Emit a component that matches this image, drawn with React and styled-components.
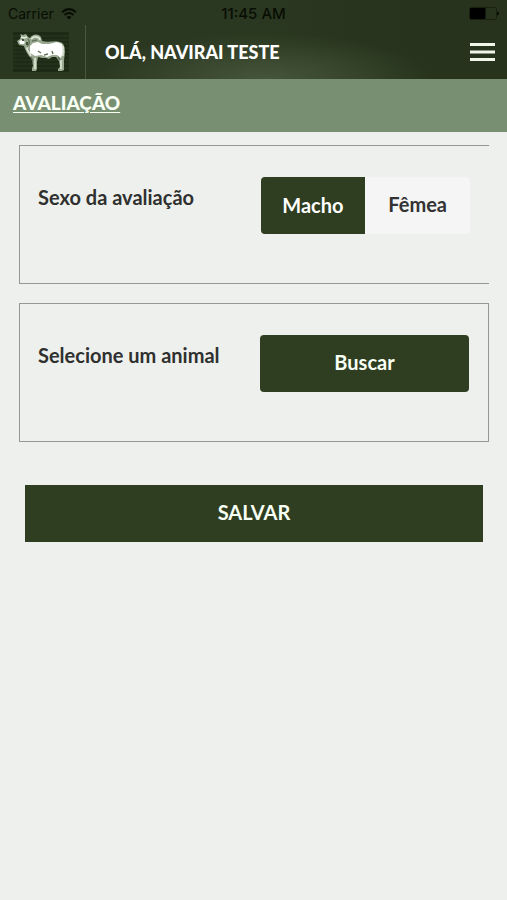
import React, { useState } from "react";
import styled, { createGlobalStyle } from "styled-components";

const GlobalStyle = createGlobalStyle`
  *, *::before, *::after { box-sizing: border-box; }
  body {
    margin: 0;
    background: #eef0ed;
    color: #2f302f;
    font-family: Lato, "Open Sans", sans-serif;
    font-size: 20px;
    font-weight: 700;
    line-height: 24px;
  }
  button, input { font: inherit; margin: 0; }
`;

const Header = styled.header`
  height: 79px;
  color: #fff;
  background:
    radial-gradient(ellipse 170px 46px at 52% 100%, #45553a 0%, #3a4930 40%, rgba(43, 56, 33, 0) 100%),
    linear-gradient(90deg, #2a3721 0%, #2b3821 50%, #27331d 80%);
`;

const StatusBar = styled.div`
  display: grid;
  grid-template-columns: 1fr auto 1fr;
  align-items: center;
  height: 25px;
  padding: 2px 8px 0;
  color: #080d04;
  font-family: Inter, "Liberation Sans", sans-serif;
  font-size: 14px;
  font-weight: 400;
  line-height: 22px;
`;

const Carrier = styled.span`
  display: flex;
  align-items: center;
  gap: 7px;
`;

const Clock = styled.time`
  font-size: 15px;
  font-weight: 500;
`;

const BatteryIcon = styled.svg`
  justify-self: end;
`;

const NavBar = styled.div`
  display: flex;
  align-items: stretch;
  height: 54px;
  padding: 0 12px 0 13px;
`;

const Logo = styled.svg`
  display: block;
  align-self: center;
  margin-right: 16px;
`;

const Greeting = styled.h1`
  display: flex;
  align-items: center;
  flex: 1;
  margin: 0;
  padding-left: 19px;
  border-left: 1px solid #4a5740;
  font-size: 18px;
  font-weight: 900;
  line-height: 24px;
`;

const MenuButton = styled.button`
  display: flex;
  align-items: center;
  padding: 0;
  border: 0;
  background: none;
  color: #f1f6ea;
  cursor: pointer;
`;

const TitleBar = styled.div`
  height: 53px;
  padding: 12px 13px;
  background: #789071;
`;

const PageTitle = styled.h2`
  margin: 0;
  color: #f8fff4;
  font-size: 19px;
  font-weight: 900;
  line-height: 24px;
  text-decoration: underline;
  text-decoration-thickness: 1px;
  text-underline-offset: 2px;
`;

const Form = styled.form`
  display: flex;
  flex-direction: column;
  gap: 19px;
  padding: 13px 18px 24px 19px;
`;

const Card = styled.section`
  display: grid;
  grid-template-columns: 1fr 1fr;
  column-gap: 13px;
  align-items: start;
  min-height: 139px;
  padding: 31px 19px 30px 18px;
  border: 1px solid #949894;
  border-right-width: ${(p) => (p.$open ? "0" : "1px")};
`;

const FieldName = styled.span`
  padding-top: 8px;
  white-space: nowrap;
`;

const Segments = styled.div`
  display: grid;
  grid-template-columns: 1fr 1fr;
  height: 57px;
  border-radius: 4px;
  overflow: hidden;
`;

const Segment = styled.label`
  display: flex;
  align-items: center;
  justify-content: center;
  padding-bottom: ${(p) => (p.$checked ? "2px" : "4px")};
  background: ${(p) => (p.$checked ? "#2f3d20" : "#f5f5f5")};
  color: ${(p) => (p.$checked ? "#fff" : "#333")};
  cursor: pointer;
`;

const SegmentInput = styled.input`
  appearance: none;
  width: 0;
  height: 0;
`;

const ActionButton = styled.button`
  height: 57px;
  padding: 0 16px 3px;
  border: 0;
  border-radius: ${(p) => (p.$square ? "0" : "4px")};
  margin: ${(p) => (p.$square ? "24px 6px 0" : "0")};
  background: #2f3d20;
  color: #f8fff4;
  cursor: pointer;
`;

function WifiIcon() {
  return (
    <svg width="16" height="12" viewBox="0 0 16 12" fill="none" stroke="currentColor" strokeWidth="2" aria-hidden="true">
      <path d="M1 4.3Q8-2 15 4.3M3.5 7Q8 3 12.5 7" />
      <path d="M5.5 9Q8 7 10.5 9L8 11.5Z" fill="currentColor" stroke="none" />
    </svg>
  );
}

function Battery() {
  return (
    <BatteryIcon width="30" height="13" viewBox="0 0 30 13" role="img" aria-label="Bateria">
      <rect x="0.5" y="0.5" width="27" height="12" rx="2" fill="none" stroke="#182010" />
      <rect x="1" y="1" width="15.5" height="11" rx="1" fill="#000" />
      <path d="M28 4.5q2 0 2 2t-2 2z" fill="#080d04" />
    </BatteryIcon>
  );
}

function BullLogo() {
  return (
    <Logo width="56" height="40" viewBox="0 0 56 40" role="img" aria-label="Navirai">
      <rect width="56" height="40" fill="#1d2a16" />
      <path
        d="M0 4H56M0 8H56M0 12H56M0 16H56M0 20H56M0 24H56M0 28H56M0 32H56M0 36H56"
        stroke="#2b3922"
      />
      <path
        d="M4 9 7 7 8 4 7 2 10 3 13 2 15 5 17 6C19 2 25 1 28 5L29 9C36 11 42 8 47 10C51 11 52 15 52 20L51 28 51 38 49 39 45 39 45 37 47 35 46 29 43 25 39 25 36 27 33 26 29 26 25 25 24 30 24 37 23 39 19 39 19 36 20 34 19 27 16 24 14 21 12 17 11 14 6 13Z"
        fill="#98a98f"
      />
      <path
        d="M6 9 9 8 12 10 11 12 7 12ZM17 14 20 11 25 10 29 12 36 12 44 10 49 12 50 20 48 26 44 23 39 23 34 25 28 23 22 24 17 21Z"
        fill="#fff"
      />
      <path
        d="M18 7Q21 4 24 5T27 8M15 13 14 17 18 24M22 26V37M48 28V37M50 14 50 24M8 5 11 6 14 5"
        fill="none"
        stroke="#e5eae0"
        strokeWidth="1.5"
      />
      <path
        d="M15 7Q18 11 14 15M19 9 24 8M25 19 28 21M39 19 40 22M31 23 35 22M45 25 47 28M18 25 20 29"
        fill="none"
        stroke="#65745d"
        strokeWidth="1.5"
      />
      <path d="M9 8h2M14 10v3" stroke="#223019" strokeWidth="1.5" />
    </Logo>
  );
}

function MenuIcon() {
  return (
    <svg width="25" height="20" viewBox="0 0 25 20" fill="none" stroke="currentColor" strokeWidth="3" aria-hidden="true">
      <path d="M0 2.5H25M0 10H25M0 17.5H25" />
    </svg>
  );
}

const SEXES = ["Macho", "Fêmea"];

export default function App() {
  const [sex, setSex] = useState("Macho");

  return (
    <>
      <GlobalStyle />
      <Header>
        <StatusBar>
          <Carrier>Carrier <WifiIcon /></Carrier>
          <Clock>11:45 AM</Clock>
          <Battery />
        </StatusBar>
        <NavBar>
          <BullLogo />
          <Greeting>OLÁ, NAVIRAI TESTE</Greeting>
          <MenuButton type="button" aria-label="Menu"><MenuIcon /></MenuButton>
        </NavBar>
      </Header>
      <main>
        <TitleBar>
          <PageTitle>AVALIAÇÃO</PageTitle>
        </TitleBar>
        <Form onSubmit={(e) => e.preventDefault()}>
          <Card $open>
            <FieldName id="sex-name">Sexo da avaliação</FieldName>
            <Segments role="radiogroup" aria-labelledby="sex-name">
              {SEXES.map((name) => (
                <Segment key={name} $checked={sex === name}>
                  <SegmentInput
                    type="radio"
                    name="sex"
                    value={name}
                    checked={sex === name}
                    onChange={() => setSex(name)}
                  />
                  {name}
                </Segment>
              ))}
            </Segments>
          </Card>
          <Card>
            <FieldName id="animal-name">Selecione um animal</FieldName>
            <ActionButton type="button" aria-describedby="animal-name">Buscar</ActionButton>
          </Card>
          <ActionButton type="submit" $square>SALVAR</ActionButton>
        </Form>
      </main>
    </>
  );
}
